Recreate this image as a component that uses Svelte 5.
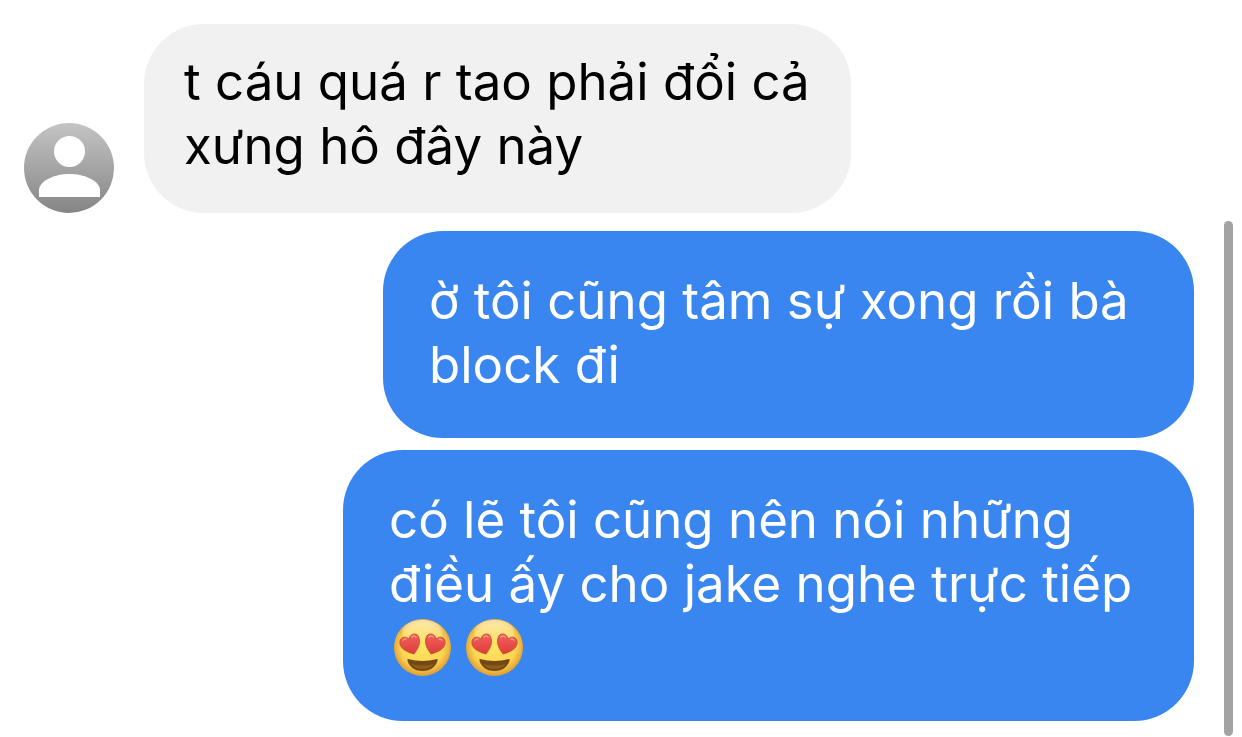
<script>
  const received = ["t cáu quá r tao phải đổi cả xưng hô đây này"];

  const sent = [
    { text: "ờ tôi cũng tâm sự xong rồi bà block đi", hearts: 0 },
    {
      text: "có lẽ tôi cũng nên nói những điều ấy cho jake nghe trực tiếp",
      hearts: 2,
    },
  ];
</script>

<main class="chat">
  <section class="messages">
    {#each received as text}
      <article class="row">
        <svg class="avatar" viewBox="0 0 90 90" aria-hidden="true">
          <defs>
            <linearGradient id="avatar-bg" x1="0" y1="0" x2="0" y2="1">
              <stop offset="0" stop-color="#c4c4c4" />
              <stop offset="1" stop-color="#858585" />
            </linearGradient>
          </defs>
          <circle cx="45" cy="45" r="45" fill="url(#avatar-bg)" />
          <circle cx="45.5" cy="28.5" r="15.5" fill="#fff" />
          <path
            d="M15 74V66C17 57 31 51 45.5 51S74 57 76 66V74Z"
            fill="#fff"
          />
        </svg>
        <p class="bubble">{text}</p>
      </article>
    {/each}

    <div class="sent-group">
      {#each sent as message}
        <p class="bubble sent" class:wide={message.hearts > 0}>
          {message.text}
          {#if message.hearts}
            <span class="emojis">
              {#each Array(message.hearts) as _, i}
                <svg class="emoji" viewBox="0 0 60 60" role="img" aria-label="😍">
                  <defs>
                    <radialGradient id="face-{i}" cx=".5" cy=".47" r=".54">
                      <stop offset="0" stop-color="#fee563" />
                      <stop offset=".7" stop-color="#fcd552" />
                      <stop offset="1" stop-color="#dd982f" />
                    </radialGradient>
                    <linearGradient id="shine-{i}" x1="0" y1="0" x2="0" y2="1">
                      <stop offset="0" stop-color="#fff" stop-opacity=".55" />
                      <stop offset="1" stop-color="#fff" stop-opacity="0" />
                    </linearGradient>
                    <linearGradient id="heart-{i}" x1="0" y1="0" x2="0" y2="1">
                      <stop offset="0" stop-color="#f2605c" />
                      <stop offset="1" stop-color="#df3d3c" />
                    </linearGradient>
                  </defs>
                  <circle cx="29.5" cy="29.5" r="28.5" fill="url(#face-{i})" />
                  <ellipse cx="29.5" cy="14" rx="20" ry="12" fill="url(#shine-{i})" />
                  <path
                    d="M15 41Q29.5 45 44 41Q45 41 44.5 43C42 50 36 53 29.5 53S17 50 14.5 43Q14 41 15 41Z"
                    fill="#744814"
                  />
                  <path
                    d="M18 46Q29.5 49 41 46Q37 51 29.5 51T18 46Z"
                    fill="#8d5d20"
                  />
                  <path
                    d="M21 36C14 34 8 31 7 26C6 20 11 17 16 21C17 15 25 14 26 20C28 26 24 32 21 36Z"
                    fill="url(#heart-{i})"
                    stroke="#b94a2c"
                    stroke-width=".8"
                  />
                  <path
                    d="M38 36C35 32 31 26 33 20C34 14 42 15 43 21C48 17 53 20 52 26C51 31 45 34 38 36Z"
                    fill="url(#heart-{i})"
                    stroke="#b94a2c"
                    stroke-width=".8"
                  />
                  <g
                    fill="none"
                    stroke="#ffb0a4"
                    stroke-width="1.5"
                    stroke-linecap="round"
                    opacity=".7"
                  >
                    <path d="M10 22Q11 21 13 21" />
                    <path d="M19 19Q21 17 23 19" />
                    <path d="M36 19Q38 17 40 19" />
                    <path d="M46 21Q48 21 49 22" />
                  </g>
                </svg>
              {/each}
            </span>
          {/if}
        </p>
      {/each}
    </div>
  </section>

  <div class="scrollbar"></div>
</main>

<style>
  :global(body) {
    margin: 0;
    background: #fff;
  }

  .chat {
    display: flex;
    font-family: Inter, "Liberation Sans", sans-serif;
    font-size: 51px;
    line-height: 64px;
  }

  .messages {
    flex: 1;
    padding: 24px 30px 16px 24px;
  }

  .row {
    display: flex;
    align-items: flex-end;
    gap: 30px;
    margin-bottom: 18px;
  }

  .avatar {
    flex: none;
    width: 90px;
    height: 90px;
  }

  .bubble {
    box-sizing: border-box;
    max-width: 707px;
    margin: 0;
    padding: 26px 40px 35px;
    border-radius: 60px;
    background: #f1f1f1;
    color: #000;
  }

  .sent-group {
    display: flex;
    flex-direction: column;
    align-items: flex-end;
    gap: 12px;
  }

  .sent {
    max-width: 811px;
    padding: 38px 46px 41px;
    background: #3a86f0;
    color: #fff;
  }

  .wide {
    max-width: 851px;
  }

  .emojis {
    display: flex;
    gap: 12px;
    height: 64px;
    align-items: center;
    padding-left: 4px;
  }

  .emoji {
    width: 60px;
    height: 60px;
  }

  .scrollbar {
    width: 9px;
    margin: 221px 9px 1px 0;
    border-radius: 5px;
    background: #a3a3a3;
  }
</style>
